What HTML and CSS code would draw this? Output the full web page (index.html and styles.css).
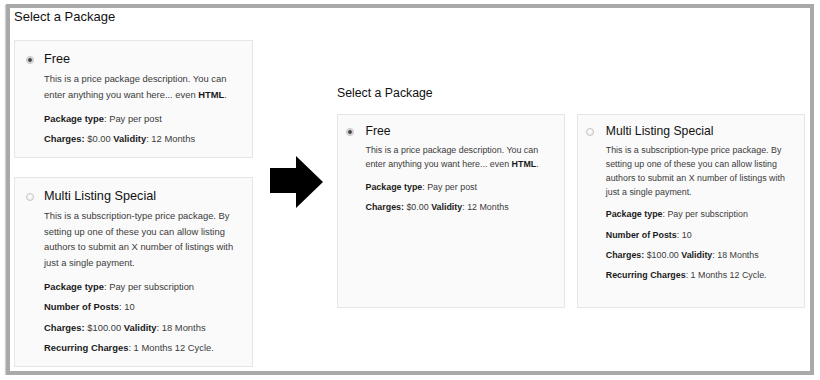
FILE: index.html
```html
<!DOCTYPE html>
<html lang="en">

<head>
    <title>Select a Package</title>
    <meta charset="UTF-8">
    <link rel="stylesheet" href="styles.css">
</head>

<body>
<div class="frame">
    <!-- before: stacked list -->
    <section class="picker">
        <h2 class="picker-title">Select a Package</h2>
        <div class="package-list">
            <div class="package">
                <span class="radio checked"></span>
                <div class="package-body">
                    <h3 class="package-name">Free</h3>
                    <p class="package-desc">This is a price package description. You can enter anything you want here... even <b>HTML</b>.</p>
                    <p class="package-meta"><b>Package type</b>: Pay per post</p>
                    <p class="package-meta"><b>Charges:</b> $0.00 <b>Validity</b>: 12 Months</p>
                </div>
            </div>
            <div class="package">
                <span class="radio"></span>
                <div class="package-body">
                    <h3 class="package-name">Multi Listing Special</h3>
                    <p class="package-desc">This is a subscription-type price package. By setting up one of these you can allow listing authors to submit an X number of listings with just a single payment.</p>
                    <p class="package-meta"><b>Package type</b>: Pay per subscription</p>
                    <p class="package-meta"><b>Number of Posts</b>: 10</p>
                    <p class="package-meta"><b>Charges:</b> $100.00 <b>Validity</b>: 18 Months</p>
                    <p class="package-meta"><b>Recurring Charges</b>: 1 Months 12 Cycle.</p>
                </div>
            </div>
        </div>
    </section>

    <svg class="arrow" width="53" height="52" viewBox="0 0 53 52">
        <path d="M0 12 H26 V0 L53 26 L26 52 V37 H0 Z" fill="#000"/>
    </svg>

    <!-- after: side by side -->
    <section class="picker picker-wide">
        <h2 class="picker-title">Select a Package</h2>
        <div class="package-list">
            <div class="package">
                <span class="radio checked"></span>
                <div class="package-body">
                    <h3 class="package-name">Free</h3>
                    <p class="package-desc">This is a price package description. You can enter anything you want here... even <b>HTML</b>.</p>
                    <p class="package-meta"><b>Package type</b>: Pay per post</p>
                    <p class="package-meta"><b>Charges:</b> $0.00 <b>Validity</b>: 12 Months</p>
                </div>
            </div>
            <div class="package">
                <span class="radio"></span>
                <div class="package-body">
                    <h3 class="package-name">Multi Listing Special</h3>
                    <p class="package-desc">This is a subscription-type price package. By setting up one of these you can allow listing authors to submit an X number of listings with just a single payment.</p>
                    <p class="package-meta"><b>Package type</b>: Pay per subscription</p>
                    <p class="package-meta"><b>Number of Posts</b>: 10</p>
                    <p class="package-meta"><b>Charges:</b> $100.00 <b>Validity</b>: 18 Months</p>
                    <p class="package-meta"><b>Recurring Charges</b>: 1 Months 12 Cycle.</p>
                </div>
            </div>
        </div>
    </section>
</div>
</body>

</html>
```

FILE: styles.css
```css
body {
    margin: 0;
    padding: 0;
    background: #fff;
    font-family: 'Liberation Sans', Arial, sans-serif;
    color: #333;
}

/* gray screenshot frame */
.frame {
    box-sizing: border-box;
    width: 808px;
    height: 371px;
    margin: 4px 0 0 6px;
    padding: 1px 0 0 4px;
    border: 4px solid #a9a9a9;
    box-shadow: -1px 1px 1px #cfcfcf;
    background: #fff;
    display: flex;
    align-items: flex-start;
}

.picker {
    width: 239px;
    flex-shrink: 0;
}

.picker-title {
    margin: 0 0 15.5px;
    font-size: 13px;
    line-height: 15px;
    font-weight: normal;
    color: #111;
}

.package-list {
    display: flex;
    flex-direction: column;
    gap: 19px;
}

.package {
    display: flex;
    align-items: flex-start;
    background-color: #fafafa;
    border: 1px solid #e6e6e6;
    padding: 11px 10px 10px 10.5px;
}

/* radio button */
.radio {
    flex-shrink: 0;
    box-sizing: border-box;
    width: 8px;
    height: 8px;
    margin: 4px 10.5px 0 0;
    border-radius: 50%;
    border: 1px solid #c4c4c4;
    background: radial-gradient(circle at 50% 35%, #fff 0%, #e9e9e9 100%);
}

.radio.checked {
    background: radial-gradient(circle, #3c3c3c 0, #4a4a4a 1.4px, #bdbdbd 2.2px, #eee 3px);
}

.package-body {
    flex: 1;
}

.package-name {
    margin: 0 0 4.5px;
    font-size: 12.7px;
    line-height: 15px;
    font-weight: normal;
    color: #111;
}

.package-desc,
.package-meta {
    margin: 0;
    font-size: 9.4px;
    line-height: 15.6px;
    color: #3a3a3a;
}

.package-desc {
    margin-bottom: 8.4px;
}

.package-meta + .package-meta {
    margin-top: 4.8px;
}

.package b {
    color: #1a1a1a;
}

.arrow {
    flex-shrink: 0;
    margin: 147px 14px 0 17px;
}

/* right hand version, a bit smaller */
.picker-wide {
    width: 468px;
    margin-top: 76.5px;
}

.picker-wide .picker-title {
    font-size: 12.3px;
    margin-bottom: 13.5px;
}

.picker-wide .package-list {
    flex-direction: row;
    gap: 12.5px;
}

.picker-wide .package {
    flex: 1;
    padding: 9.3px 10px 24px 7.5px;
}

.picker-wide .radio {
    margin: 4.2px 12px 0 0;
}

.picker-wide .package-name {
    font-size: 12.2px;
    line-height: 14.4px;
    margin-bottom: 5.5px;
}

.picker-wide .package-desc,
.picker-wide .package-meta {
    font-size: 8.9px;
    line-height: 13.9px;
}

.picker-wide .package-desc {
    margin-bottom: 8.6px;
}

.picker-wide .package-meta + .package-meta {
    margin-top: 6.3px;
}
```
